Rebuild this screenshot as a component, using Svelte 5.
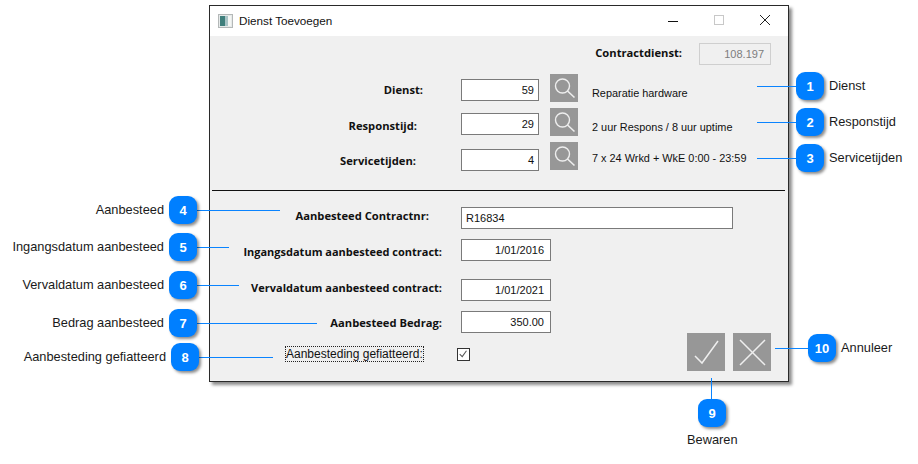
<script lang="ts">
  const lines = [
    { x: 757, y: 86, w: 39, h: 1 },
    { x: 757, y: 122, w: 39, h: 1 },
    { x: 757, y: 158, w: 39, h: 1 },
    { x: 197, y: 210, w: 83, h: 1 },
    { x: 197, y: 247, w: 32, h: 1 },
    { x: 197, y: 285, w: 42, h: 1 },
    { x: 197, y: 323, w: 120, h: 1 },
    { x: 199, y: 357, w: 74, h: 1 },
    { x: 711, y: 378, w: 1, h: 22 },
    { x: 775, y: 348, w: 33, h: 1 }
  ];

  const badges = [
    { n: 1, x: 810, y: 86 },
    { n: 2, x: 810, y: 122 },
    { n: 3, x: 810, y: 158 },
    { n: 4, x: 183, y: 210 },
    { n: 5, x: 183, y: 247 },
    { n: 6, x: 183, y: 285 },
    { n: 7, x: 183, y: 323 },
    { n: 8, x: 185, y: 357 },
    { n: 9, x: 712, y: 413 },
    { n: 10, x: 822, y: 348 }
  ];

  const captionsRight = [
    { text: 'Dienst', x: 829, y: 86 },
    { text: 'Responstijd', x: 829, y: 122 },
    { text: 'Servicetijden', x: 829, y: 158 },
    { text: 'Annuleer', x: 841, y: 348 }
  ];

  const captionsLeft = [
    { text: 'Aanbesteed', x: 164, y: 210 },
    { text: 'Ingangsdatum aanbesteed', x: 164, y: 247 },
    { text: 'Vervaldatum aanbesteed', x: 164, y: 285 },
    { text: 'Bedrag aanbesteed', x: 164, y: 323 },
    { text: 'Aanbesteding gefiatteerd', x: 166, y: 357 }
  ];
</script>

<div class="page">
  <div class="window">
    <header class="titlebar">
      <svg class="appicon" width="15" height="14" viewBox="0 0 15 14">
        <rect x="0.5" y="0.5" width="14" height="13" fill="#e6eaea" stroke="#b4b8b8" />
        <rect x="2" y="2" width="5" height="10" fill="#3f7f7c" />
        <rect x="7" y="2" width="3" height="10" fill="#a9c4c6" />
        <rect x="10" y="2" width="3" height="10" fill="#f4f6f4" />
      </svg>
      <span class="title">Dienst Toevoegen</span>
      <div class="winbtns">
        <svg width="12" height="12" viewBox="0 0 12 12"><path d="M1 6.5h10" stroke="#111" /></svg>
        <svg width="12" height="12" viewBox="0 0 12 12"><rect x="1.5" y="0.5" width="9" height="9" fill="none" stroke="#c8c8c8" /></svg>
        <svg width="12" height="12" viewBox="0 0 12 12"><path d="M1 0l10 10M11 0L1 10" stroke="#222" fill="none" /></svg>
      </div>
    </header>

    <div class="body">
      <div class="contract-row">
        <span class="label">Contractdienst:</span>
        <div class="field disabled contract">108.197</div>
      </div>

      <div class="row dienst">
        <span class="label lbl">Dienst:</span>
        <div class="field short">59</div>
        <button class="search" aria-label="Zoek">
          <svg width="28" height="28" viewBox="0 0 28 28"><circle cx="12.5" cy="12" r="7" fill="none" stroke="#eee" stroke-width="1.4" /><path d="M17.5 17l7 6.5" stroke="#eee" stroke-width="1.6" /></svg>
        </button>
        <span class="desc">Reparatie hardware</span>
      </div>

      <div class="row respons">
        <span class="label lbl">Responstijd:</span>
        <div class="field short">29</div>
        <button class="search" aria-label="Zoek">
          <svg width="28" height="28" viewBox="0 0 28 28"><circle cx="12.5" cy="12" r="7" fill="none" stroke="#eee" stroke-width="1.4" /><path d="M17.5 17l7 6.5" stroke="#eee" stroke-width="1.6" /></svg>
        </button>
        <span class="desc">2 uur Respons / 8 uur uptime</span>
      </div>

      <div class="row service">
        <span class="label lbl">Servicetijden:</span>
        <div class="field short">4</div>
        <button class="search" aria-label="Zoek">
          <svg width="28" height="28" viewBox="0 0 28 28"><circle cx="12.5" cy="12" r="7" fill="none" stroke="#eee" stroke-width="1.4" /><path d="M17.5 17l7 6.5" stroke="#eee" stroke-width="1.6" /></svg>
        </button>
        <span class="desc">7 x 24 Wrkd + WkE 0:00 - 23:59</span>
      </div>

      <hr class="divider" />

      <div class="row2 nr">
        <span class="label lbl2">Aanbesteed Contractnr:</span>
        <div class="field wide">R16834</div>
      </div>
      <div class="row2 ingang">
        <span class="label lbl2">Ingangsdatum aanbesteed contract:</span>
        <div class="field date">1/01/2016</div>
      </div>
      <div class="row2 verval">
        <span class="label lbl2">Vervaldatum aanbesteed contract:</span>
        <div class="field date">1/01/2021</div>
      </div>
      <div class="row2 bedrag">
        <span class="label lbl2">Aanbesteed Bedrag:</span>
        <div class="field date">350.00</div>
      </div>

      <div class="row2 last">
        <span class="focus">Aanbesteding gefiatteerd:</span>
        <span class="check">
          <svg width="13" height="13" viewBox="0 0 13 13"><path d="M2 6l3 3 5-7" fill="none" stroke="#555" stroke-width="1.2" /></svg>
        </span>
        <div class="actions">
          <button class="action" aria-label="Bewaren">
            <svg width="38" height="38" viewBox="0 0 38 38"><path d="M8 23l7 7L31 8" fill="none" stroke="#eee" stroke-width="1.5" /></svg>
          </button>
          <button class="action" aria-label="Annuleer">
            <svg width="38" height="38" viewBox="0 0 38 38"><path d="M7 7l25 25M32 7L7 32" fill="none" stroke="#eee" stroke-width="1.5" /></svg>
          </button>
        </div>
      </div>
    </div>
  </div>

  {#each lines as l}
    <div class="line" style="left:{l.x}px;top:{l.y}px;width:{l.w}px;height:{l.h}px"></div>
  {/each}
  {#each badges as b}
    <div class="badge" style="left:{b.x - 14}px;top:{b.y - 14}px">{b.n}</div>
  {/each}
  {#each captionsRight as c}
    <span class="caption" style="left:{c.x}px;top:{c.y - 9}px">{c.text}</span>
  {/each}
  {#each captionsLeft as c}
    <span class="caption" style="right:{918 - c.x}px;top:{c.y - 9}px">{c.text}</span>
  {/each}
  <span class="caption" style="left:687px;top:431px">Bewaren</span>
</div>

<style>
  :global(body) {
    margin: 0;
    background: #fff;
  }

  .page {
    position: relative;
    width: 918px;
    height: 464px;
    overflow: hidden;
    font-family: "Liberation Sans", Arial, sans-serif;
    color: #111;
  }

  .window {
    position: absolute;
    left: 209px;
    top: 5px;
    width: 578px;
    height: 375px;
    border: 1px solid #2a2a2a;
    background: #f0f0f0;
    box-shadow: 3px 3px 3px rgba(0, 0, 0, 0.45);
    display: flex;
    flex-direction: column;
  }

  .titlebar {
    height: 30px;
    background: #fff;
    display: flex;
    align-items: center;
    padding-left: 8px;
    flex: none;
  }

  .appicon {
    margin-right: 6px;
  }

  .title {
    font-size: 11.7px;
    padding-bottom: 2px;
  }

  .winbtns {
    margin-left: auto;
    display: flex;
    gap: 34px;
    padding-right: 17px;
  }

  .body {
    flex: 1;
    position: relative;
    font-family: "Open Sans", sans-serif;
    font-size: 12px;
  }

  .label {
    font-weight: 700;
    font-size: 11.2px;
    white-space: nowrap;
  }

  .field {
    box-sizing: border-box;
    height: 22px;
    border: 1px solid #7a7a7a;
    background: #fff;
    font-family: "Liberation Sans", sans-serif;
    font-size: 11px;
    line-height: 20px;
    text-align: right;
    padding: 0 4px;
    flex: none;
    color: #111;
  }

  .short {
    width: 78px;
  }

  .date {
    width: 90px;
    padding-right: 6px;
  }

  .wide {
    width: 272px;
    text-align: left;
  }

  .disabled {
    border-color: #cfcfcf;
    color: #7d7d7d;
    background: #f0f0f0;
    padding-right: 6px;
  }

  .contract {
    width: 72px;
  }

  .contract-row {
    display: flex;
    justify-content: flex-end;
    align-items: center;
    gap: 17px;
    padding: 7px 17px 0 0;
  }

  .contract-row .label {
    padding-bottom: 3px;
  }

  .row {
    display: flex;
    height: 22px;
    align-items: center;
  }

  .dienst {
    margin-top: 14px;
  }

  .respons {
    margin-top: 12px;
  }

  .service {
    margin-top: 14px;
  }

  .lbl {
    width: 251px;
    box-sizing: border-box;
    text-align: right;
  }

  .dienst .lbl {
    padding-right: 38px;
    padding-bottom: 2px;
  }

  .respons .lbl {
    padding-right: 44px;
    padding-top: 3px;
  }

  .service .lbl {
    padding-right: 45px;
  }

  .search {
    box-sizing: border-box;
    width: 28px;
    height: 28px;
    padding: 0;
    margin: 0 0 0 11px;
    border: 0;
    background: #979797;
    flex: none;
    display: block;
  }

  .search svg {
    display: block;
  }

  .dienst .search,
  .respons .search {
    margin-top: -5px;
    margin-bottom: 0;
    align-self: flex-start;
  }

  .service .search {
    margin-top: -7px;
    align-self: flex-start;
  }

  .desc {
    margin-left: 14px;
    font-family: "Liberation Sans", sans-serif;
    font-size: 10.9px;
    white-space: nowrap;
  }

  .dienst .desc {
    padding-top: 6px;
  }

  .respons .desc {
    padding-top: 6px;
  }

  .service .desc {
    padding-bottom: 4px;
  }

  .divider {
    margin: 19px 3px 0 2px;
    border: 0;
    border-top: 1px solid #111;
    height: 0;
  }

  .row2 {
    display: flex;
    align-items: center;
    height: 22px;
  }

  .lbl2 {
    width: 251px;
    box-sizing: border-box;
    padding-right: 19px;
    text-align: right;
  }

  .nr {
    margin-top: 16px;
  }

  .nr .lbl2 {
    padding-right: 32px;
    padding-bottom: 6px;
  }

  .ingang {
    margin-top: 10px;
  }

  .ingang .lbl2 {
    font-size: 11px;
    padding-top: 3px;
  }

  .verval {
    margin-top: 18px;
  }

  .verval .lbl2 {
    font-size: 11px;
    padding-bottom: 5px;
  }

  .bedrag {
    margin-top: 10px;
  }

  .bedrag .lbl2 {
    padding-top: 1px;
  }

  .last {
    margin-top: 10px;
    padding-left: 76px;
  }

  .focus {
    outline: 1px dotted #222;
    font-family: "Liberation Sans", sans-serif;
    font-size: 12px;
    line-height: 14px;
    white-space: nowrap;
  }

  .check {
    box-sizing: border-box;
    width: 13px;
    height: 13px;
    border: 1px solid #333;
    background: #fff;
    margin-left: 34px;
    display: flex;
    align-items: center;
    justify-content: center;
  }

  .actions {
    position: absolute;
    right: 17px;
    bottom: 10px;
    display: flex;
    gap: 8px;
  }

  .action {
    width: 38px;
    height: 38px;
    padding: 0;
    border: 0;
    background: #979797;
  }

  .action svg {
    display: block;
  }

  .line {
    position: absolute;
    background: #0a84ff;
  }

  .badge {
    position: absolute;
    width: 28px;
    height: 28px;
    border-radius: 9px;
    background: #007fff;
    color: #fff;
    font-weight: 700;
    font-size: 13px;
    display: flex;
    align-items: center;
    justify-content: center;
    box-shadow: 2px 2px 3px rgba(0, 0, 0, 0.45);
  }

  .caption {
    position: absolute;
    font-size: 12.8px;
    line-height: 18px;
    white-space: nowrap;
    color: #1a1a1a;
  }
</style>
